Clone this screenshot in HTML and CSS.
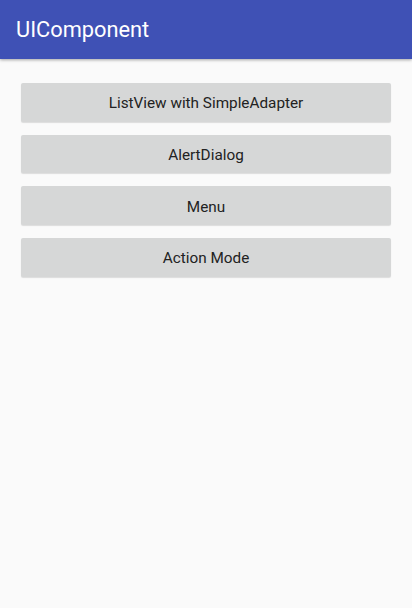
FILE: index.html
```html
<!DOCTYPE html>
<html>
<head>
<meta charset="utf-8">
<link rel="stylesheet" href="styles.css">
</head>
<body>
<header class="appbar"><span class="title">UIComponent</span></header>
<main class="content">
  <button class="btn">ListView with SimpleAdapter</button>
  <button class="btn">AlertDialog</button>
  <button class="btn">Menu</button>
  <button class="btn">Action Mode</button>
</main>
</body>
</html>
```
FILE: styles.css
```css
html, body {
  margin: 0;
  padding: 0;
  background: #fafafa;
  font-family: Roboto, "Noto Sans", sans-serif;
  width: 412px;
  height: 608px;
  overflow: hidden;
}
.appbar {
  height: 59px;
  background: #3f51b5;
  display: flex;
  align-items: center;
  padding-left: 16px;
  box-shadow: 0 1px 3px rgba(0,0,0,0.35);
  position: relative;
}
.title {
  color: #fff;
  font-size: 21.8px;
  margin-top: -1px;
}
.content {
  display: flex;
  flex-direction: column;
  gap: 13px;
  padding: 24px 21px 0 21px;
}
.btn {
  height: 38.7px;
  border: none;
  border-radius: 2px;
  background: #d6d7d7;
  color: #222;
  font-family: Roboto, "Noto Sans", sans-serif;
  font-size: 15.3px;
  padding: 2px 0 0 0;
  box-shadow: 0 1px 1px rgba(0,0,0,0.12);
}
```
